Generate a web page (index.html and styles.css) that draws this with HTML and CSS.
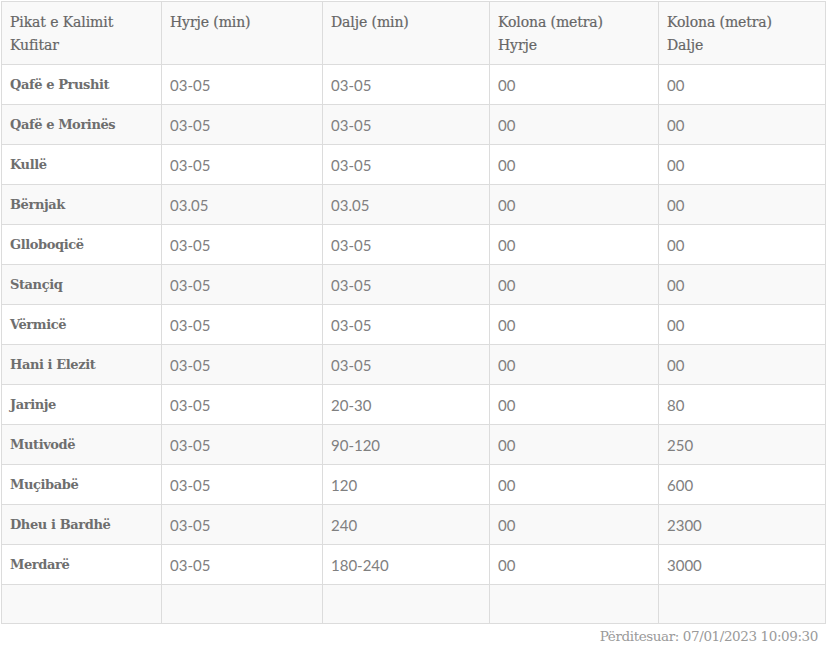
FILE: index.html
```html
<!DOCTYPE html>
<html lang="sq">
<head>
<meta charset="utf-8">
<link rel="stylesheet" href="styles.css">
</head>
<body>
<div class="wrap">
<table class="grid">
<colgroup>
<col class="c1"><col class="c2"><col class="c3"><col class="c4"><col class="c5">
</colgroup>
<thead>
<tr><th>Pikat e Kalimit<br>Kufitar</th><th>Hyrje (min)</th><th>Dalje (min)</th><th>Kolona (metra)<br>Hyrje</th><th>Kolona (metra)<br>Dalje</th></tr>
</thead>
<tbody>
<tr><td class="name">Qafë e Prushit</td><td>03-05</td><td>03-05</td><td>00</td><td>00</td></tr>
<tr><td class="name">Qafë e Morinës</td><td>03-05</td><td>03-05</td><td>00</td><td>00</td></tr>
<tr><td class="name">Kullë</td><td>03-05</td><td>03-05</td><td>00</td><td>00</td></tr>
<tr><td class="name">Bërnjak</td><td>03.05</td><td>03.05</td><td>00</td><td>00</td></tr>
<tr><td class="name">Glloboqicë</td><td>03-05</td><td>03-05</td><td>00</td><td>00</td></tr>
<tr><td class="name">Stançiq</td><td>03-05</td><td>03-05</td><td>00</td><td>00</td></tr>
<tr><td class="name">Vërmicë</td><td>03-05</td><td>03-05</td><td>00</td><td>00</td></tr>
<tr><td class="name">Hani i Elezit</td><td>03-05</td><td>03-05</td><td>00</td><td>00</td></tr>
<tr><td class="name">Jarinje</td><td>03-05</td><td>20-30</td><td>00</td><td>80</td></tr>
<tr><td class="name">Mutivodë</td><td>03-05</td><td>90-120</td><td>00</td><td>250</td></tr>
<tr><td class="name">Muçibabë</td><td>03-05</td><td>120</td><td>00</td><td>600</td></tr>
<tr><td class="name">Dheu i Bardhë</td><td>03-05</td><td>240</td><td>00</td><td>2300</td></tr>
<tr><td class="name">Merdarë</td><td>03-05</td><td>180-240</td><td>00</td><td>3000</td></tr>
<tr class="blank"><td></td><td></td><td></td><td></td><td></td></tr>
</tbody>
</table>
<p class="updated">Përditesuar: 07/01/2023 10:09:30</p>
</div>
</body>
</html>
```

FILE: styles.css
```css
html, body {
  margin: 0;
  padding: 0;
  background: #ffffff;
}
.wrap {
  padding: 1px 2px 0 1px;
}
.grid {
  width: 824px;
  border-collapse: collapse;
  table-layout: fixed;
  border: 1px solid #dcdcdc;
}
.c1 { width: 160px; }
.c2 { width: 161px; }
.c3 { width: 167px; }
.c4 { width: 169px; }
.c5 { width: 167px; }
.grid th, .grid td {
  border: 1px solid #dcdcdc;
  text-align: left;
  padding: 0 8px;
}
.grid th {
  height: 63px;
  vertical-align: top;
  padding-top: 9px;
  box-sizing: border-box;
  font-family: "DejaVu Serif", "Liberation Serif", serif;
  font-size: 14px;
  font-weight: normal;
  line-height: 23px;
  color: #666666;
  background: #f9f9f9;
  letter-spacing: -0.1px;
  -webkit-text-stroke: 0.2px #666666;
}
.grid td {
  height: 39px;
  font-family: Lato, "Open Sans", sans-serif;
  font-size: 15px;
  font-weight: 400;
  color: #808080;
  vertical-align: middle;
}
.grid td.name {
  font-family: "DejaVu Serif", "Liberation Serif", serif;
  font-size: 13px;
  font-weight: bold;
  color: #6e6e6e;
  letter-spacing: -0.4px;
}
.grid tbody tr:nth-child(even) td {
  background: #f9f9f9;
}
.grid tr.blank td {
  height: 38px;
}
.updated {
  margin: 4px 7px 0 0;
  text-align: right;
  font-family: "DejaVu Serif", "Liberation Serif", serif;
  font-size: 13.5px;
  color: #9a9a9a;
  letter-spacing: -0.4px;
}
```
